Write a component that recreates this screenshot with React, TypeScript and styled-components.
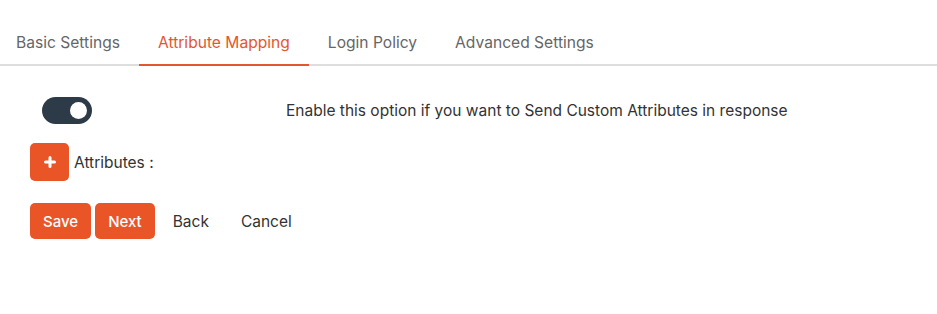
import { useState } from 'react';
import styled, { createGlobalStyle } from 'styled-components';

const GlobalStyle = createGlobalStyle`
  html, body {
    margin: 0;
    padding: 0;
    background: #ffffff;
    font-family: Inter, 'Noto Sans', sans-serif;
  }
`;

const tabs = ['Basic Settings', 'Attribute Mapping', 'Login Policy', 'Advanced Settings'];

const App = () => {
  const [active, setActive] = useState(1);
  const [enabled, setEnabled] = useState(true);

  return (
    <>
      <GlobalStyle />
      <Page>
        {/* tabs */}
        <TabBar>
          {tabs.map((tab, idx) => (
            <Tab key={tab} active={idx === active} onClick={() => setActive(idx)}>
              {tab}
            </Tab>
          ))}
        </TabBar>

        <Content>
          <OptionRow>
            <Toggle on={enabled} onClick={() => setEnabled(prev => !prev)}>
              <Knob on={enabled} />
            </Toggle>
            <OptionText>Enable this option if you want to Send Custom Attributes in response</OptionText>
          </OptionRow>

          <AttrRow>
            <AddButton aria-label="Add attribute">
              <svg width="12" height="12" viewBox="0 0 12 12">
                <path d="M6 1.5v9M1.5 6h9" stroke="#fff" strokeWidth="3" strokeLinecap="round" />
              </svg>
            </AddButton>
            <AttrLabel>Attributes :</AttrLabel>
          </AttrRow>

          <Actions>
            <PrimaryButton>Save</PrimaryButton>
            <PrimaryButton>Next</PrimaryButton>
            <LinkButton>Back</LinkButton>
            <LinkButton>Cancel</LinkButton>
          </Actions>
        </Content>
      </Page>
    </>
  );
};

export default App;

const Page = styled.div`
  width: 937px;
  height: 314px;
  background: #fff;
`;

const TabBar = styled.div`
  display: flex;
  height: 64px;
  border-bottom: 2px solid #dedede;
`;

const Tab = styled.div<{ active: boolean }>`
  display: flex;
  align-items: flex-end;
  padding: 0 19px 12px;
  margin-bottom: -2px;
  font-size: 15.6px;
  font-weight: 400;
  color: ${props => (props.active ? '#e4572e' : '#666')};
  border-bottom: 2px solid ${props => (props.active ? '#e4572e' : 'transparent')};
  cursor: pointer;
  &:first-child {
    padding-left: 16px;
  }
`;

const Content = styled.div`
  display: flex;
  flex-direction: column;
  padding: 31px 30px 0;
`;

const OptionRow = styled.div`
  display: grid;
  grid-template-columns: 256px 1fr;
  align-items: center;
`;

const Toggle = styled.div<{ on: boolean }>`
  position: relative;
  margin-left: 12px;
  width: 50px;
  height: 27px;
  border-radius: 14px;
  background: ${props => (props.on ? '#2d3a47' : '#c8c8c8')};
  cursor: pointer;
`;

const Knob = styled.span<{ on: boolean }>`
  position: absolute;
  top: 5px;
  left: ${props => (props.on ? '28px' : '6px')};
  width: 17px;
  height: 17px;
  border-radius: 50%;
  background: #fff;
`;

const OptionText = styled.span`
  font-size: 15.5px;
  color: #333;
`;

const AttrRow = styled.div`
  display: flex;
  align-items: center;
  gap: 5px;
  margin-top: 19px;
`;

const AddButton = styled.button`
  display: flex;
  align-items: center;
  justify-content: center;
  width: 39px;
  height: 38px;
  padding: 0;
  border: none;
  border-radius: 5px;
  background: #ea5527;
  cursor: pointer;
`;

const AttrLabel = styled.span`
  font-size: 15.5px;
  color: #333;
`;

const Actions = styled.div`
  display: flex;
  align-items: center;
  gap: 4px;
  margin-top: 22px;
`;

const PrimaryButton = styled.button`
  height: 36px;
  padding: 0 13px;
  border: none;
  border-radius: 5px;
  background: #ea5527;
  color: #fff;
  font-family: Inter, 'Noto Sans', sans-serif;
  font-size: 15px;
  font-weight: 500;
  cursor: pointer;
`;

const LinkButton = styled.button`
  height: 36px;
  padding: 0 14px;
  border: none;
  background: transparent;
  color: #333;
  font-family: Inter, 'Noto Sans', sans-serif;
  font-size: 15.5px;
  cursor: pointer;
`;
